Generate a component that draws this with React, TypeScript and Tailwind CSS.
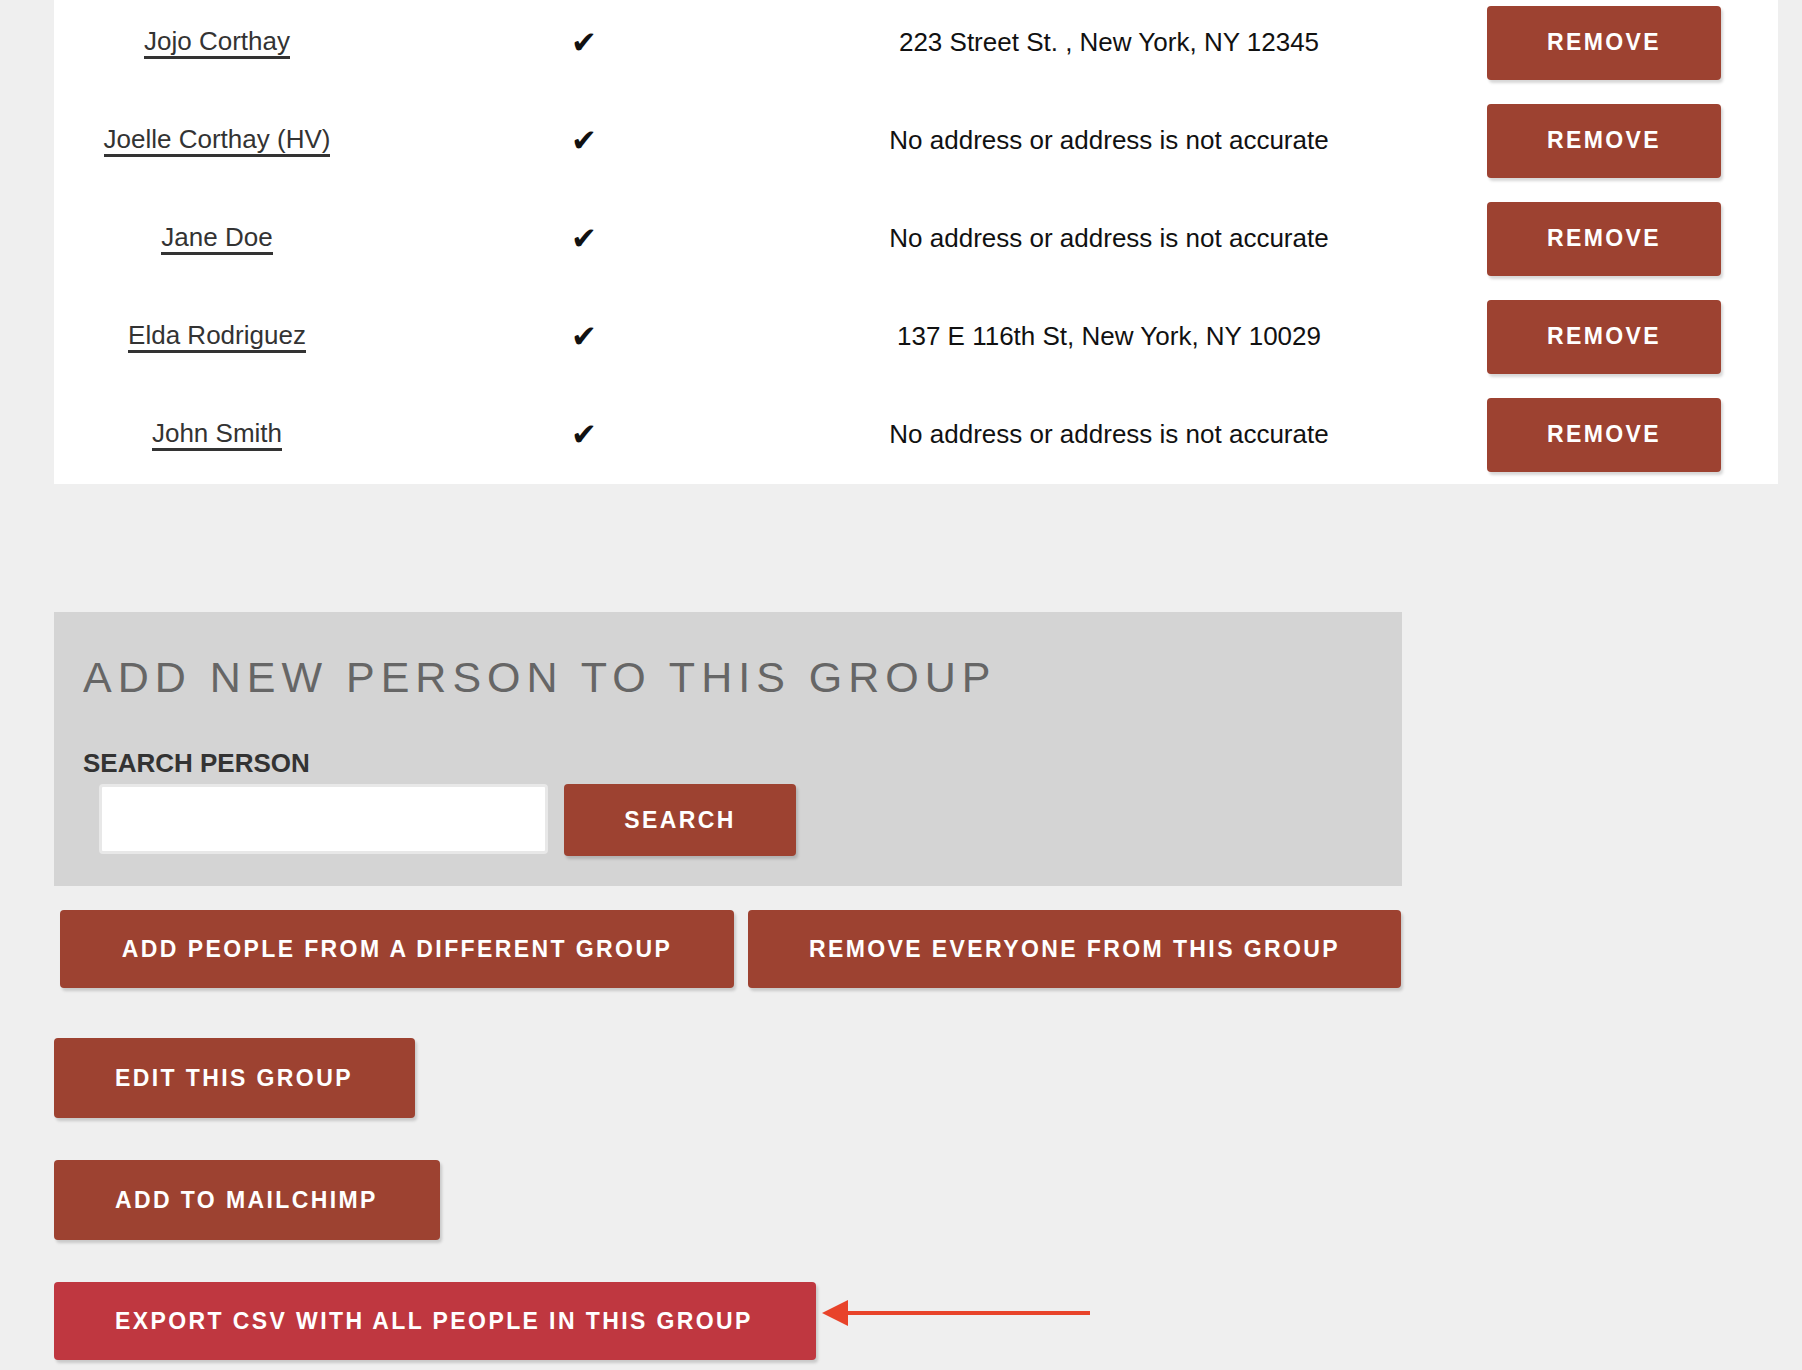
import React from 'react';

type Member = {
  name: string;
  address: string;
};

const members: Member[] = [
  { name: 'Jojo Corthay', address: '223 Street St. , New York, NY 12345' },
  { name: 'Joelle Corthay (HV)', address: 'No address or address is not accurate' },
  { name: 'Jane Doe', address: 'No address or address is not accurate' },
  { name: 'Elda Rodriguez', address: '137 E 116th St, New York, NY 10029' },
  { name: 'John Smith', address: 'No address or address is not accurate' },
];

const btn =
  'rounded-[4px] bg-[#9d4231] text-white font-bold text-[23px] tracking-[2.4px] uppercase shadow-[2px_3px_3px_rgba(0,0,0,0.16)] flex items-center justify-center';

function MemberRow({ member }: { member: Member }) {
  return (
    <div className="grid grid-cols-[326px_408px_642px_348px] h-[98px] items-center">
      <div className="flex justify-center pb-[2px]">
        <a href="#" className="inline-block text-[26px] leading-[30px] text-[#333] border-b-[3px] border-[#333]">
          {member.name}
        </a>
      </div>
      <div className="flex justify-center pb-[2px] text-[31px] leading-none text-[#111] font-['DejaVu_Sans',sans-serif]">✔</div>
      <div className="text-center pb-[2px] text-[26px] text-[#111]">{member.address}</div>
      <div className="flex justify-center">
        <button className={`${btn} w-[234px] h-[74px] pb-[2px]`}>Remove</button>
      </div>
    </div>
  );
}

export default function App() {
  return (
    <div className="min-h-screen bg-[#efefef] font-['Liberation_Sans',Arial,sans-serif] pb-[10px]">
      <div className="ml-[54px] mr-[24px] -mt-[6px] bg-white">
        {members.map((m) => (
          <MemberRow key={m.name} member={m} />
        ))}
      </div>

      <div className="ml-[54px] mt-[128px] w-[1348px] bg-[#d4d4d4] pt-[41px] pb-[30px] pl-[29px]">
        <h2 className="text-[43px] leading-[49px] tracking-[6px] text-[#666]">ADD NEW PERSON TO THIS GROUP</h2>
        <label className="block mt-[46px] text-[26px] leading-[30px] font-bold text-[#333]">SEARCH PERSON</label>
        <div className="flex items-start gap-4 mt-[6px] ml-[16px]">
          <input type="text" className="w-[449px] h-[70px] bg-white border-[3px] border-[#e8e8e8] rounded-[4px] outline-none" />
          <button className={`${btn} w-[232px] h-[72px]`}>Search</button>
        </div>
      </div>

      <div className="flex gap-[14px] ml-[60px] mt-[24px] w-[1341px]">
        <button className={`${btn} w-[674px] h-[78px]`}>Add people from a different group</button>
        <button className={`${btn} flex-1 h-[78px]`}>Remove everyone from this group</button>
      </div>

      <div className="flex flex-col items-start gap-[42px] ml-[54px] mt-[50px]">
        <button className={`${btn} h-[80px] pl-[61px] pr-[62px]`}>Edit this group</button>
        <button className={`${btn} h-[80px] pl-[61px] pr-[62px]`}>Add to Mailchimp</button>
        <div className="flex items-start gap-[6px]">
          <button className={`${btn} !bg-[#bf3740] h-[78px] pl-[61px] pr-[63px]`}>Export CSV with all people in this group</button>
          <svg width="270" height="30" viewBox="0 0 270 30" className="mt-[16px]">
            <line x1="22" y1="15" x2="268" y2="15" stroke="#e8432a" strokeWidth="4" />
            <polygon points="0,15 26,2 26,28" fill="#e8432a" />
          </svg>
        </div>
      </div>
    </div>
  );
}
